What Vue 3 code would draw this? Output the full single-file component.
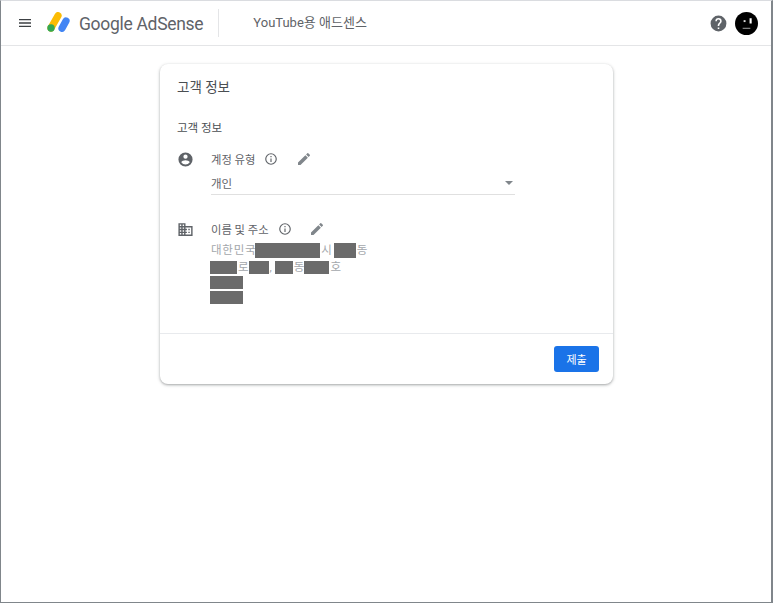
<script setup>
const pencil = 'M3 17.25V21h3.75L17.81 9.94l-3.75-3.75L3 17.25zM20.71 7.04a1 1 0 0 0 0-1.41l-2.34-2.34a1 1 0 0 0-1.41 0l-1.83 1.83 3.75 3.75 1.83-1.83z'
const info = 'M11 7h2v2h-2zm0 4h2v6h-2zm1-9a10 10 0 1 0 0 20 10 10 0 0 0 0-20zm0 18a8 8 0 1 1 0-16 8 8 0 0 1 0 16z'
</script>

<template>
  <div class="frame">
    <header class="topbar">
      <svg class="menu-icon" viewBox="0 0 24 24"><path d="M3 18h18v-2H3v2zm0-5h18v-2H3v2zm0-7v2h18V6H3z" /></svg>
      <svg class="logo" viewBox="0 0 24 22">
        <path d="M4 16 11 3.7" stroke="#fbbc04" stroke-width="7.2" stroke-linecap="round" />
        <path d="M15 16.3 19 9" stroke="#4285f4" stroke-width="7.2" stroke-linecap="round" />
        <circle cx="4" cy="16" r="3.7" fill="#34a853" />
      </svg>
      <span class="brand">Google AdSense</span>
      <span class="divider"></span>
      <span class="product">YouTube용 애드센스</span>
      <span class="spacer"></span>
      <svg class="help" viewBox="0 0 24 24"><path d="M12 2a10 10 0 1 0 0 20 10 10 0 0 0 0-20zm1 17h-2v-2h2v2zm2.07-7.75-.9.92C13.45 12.9 13 13.5 13 15h-2v-.5c0-1.1.45-2.1 1.17-2.83l1.24-1.26A2 2 0 1 0 10 9H8a4 4 0 1 1 8 0c0 .88-.36 1.68-.93 2.25z" /></svg>
      <svg class="avatar" viewBox="0 0 24 24">
        <circle cx="12" cy="12" r="12" fill="#000" />
        <rect x="15.2" y="6.5" width="2.2" height="5.5" fill="#fff" />
        <rect x="9" y="8.5" width="2" height="2" fill="#ddd" />
        <path d="M8 17h8" stroke="#aaa" stroke-width="1" />
      </svg>
    </header>

    <main class="content">
      <section class="card">
        <div class="card-body">
          <h1 class="card-title">고객 정보</h1>
          <h2 class="section-title">고객 정보</h2>

          <div class="field account">
            <svg class="field-icon" viewBox="0 0 24 24"><path d="M12 2a10 10 0 1 0 0 20 10 10 0 0 0 0-20zm0 3a3 3 0 1 1 0 6 3 3 0 0 1 0-6zm0 14.2a7.2 7.2 0 0 1-6-3.22c.03-2 4-3.08 6-3.08s5.97 1.09 6 3.08a7.2 7.2 0 0 1-6 3.22z" /></svg>
            <div class="field-main">
              <div class="field-label">
                <span>계정 유형</span>
                <svg class="info" viewBox="0 0 24 24"><path :d="info" /></svg>
                <svg class="edit" viewBox="0 0 24 24"><path :d="pencil" /></svg>
              </div>
              <div class="select">
                <span>개인</span>
                <i class="arrow"></i>
              </div>
            </div>
          </div>

          <div class="field address">
            <svg class="field-icon" viewBox="0 0 24 24"><path d="M12 7V3H2v18h20V7H12zM6 19H4v-2h2v2zm0-4H4v-2h2v2zm0-4H4V9h2v2zm0-4H4V5h2v2zm4 12H8v-2h2v2zm0-4H8v-2h2v2zm0-4H8V9h2v2zm0-4H8V5h2v2zm10 12h-8v-2h2v-2h-2v-2h2v-2h-2V9h8v10zm-2-8h-2v2h2v-2zm0 4h-2v2h2v-2z" /></svg>
            <div class="field-main">
              <div class="field-label">
                <span>이름 및 주소</span>
                <svg class="info" viewBox="0 0 24 24"><path :d="info" /></svg>
                <svg class="edit" viewBox="0 0 24 24"><path :d="pencil" /></svg>
              </div>
              <div class="addr">
                <div class="addr-line first">대한민국<b class="mask w65"></b>시<b class="mask w22"></b>동</div>
                <div class="addr-line second"><b class="mask w27"></b>로<b class="mask w20"></b>,<b class="mask w18"></b>동<b class="mask w25"></b>호</div>
                <div class="addr-line"><b class="mask w33"></b></div>
                <div class="addr-line"><b class="mask w33"></b></div>
              </div>
            </div>
          </div>
        </div>

        <footer class="card-footer">
          <button class="submit">제출</button>
        </footer>
      </section>
    </main>
  </div>
</template>

<style>
html, body {
  margin: 0;
  background: #fff;
}
</style>

<style scoped>
.frame {
  box-sizing: border-box;
  height: 603px;
  overflow: hidden;
  background: #fff;
  border: 1px solid #80868b;
  border-top-color: #dadce0;
  border-right-width: 2px;
  font-family: Roboto, "Noto Sans CJK KR", sans-serif;
}

.topbar {
  display: flex;
  align-items: center;
  box-sizing: border-box;
  height: 45px;
  border-bottom: 1px solid #e4e5e7;
  padding-left: 16px;
}

.menu-icon {
  width: 16px;
  height: 16px;
  fill: #3c4043;
}

.logo {
  width: 24px;
  height: 22px;
  margin-left: 14px;
}

.brand {
  margin-left: 8px;
  margin-top: 2px;
  font-size: 17.5px;
  letter-spacing: -.3px;
  color: #5f6368;
  white-space: nowrap;
}

.divider {
  width: 1px;
  height: 28px;
  margin-left: 15px;
  background: #e4e5e7;
}

.product {
  margin-left: 34px;
  margin-bottom: 4px;
  font-size: 13px;
  color: #5f6368;
}

.spacer {
  flex: 1;
}

.help {
  width: 19px;
  height: 19px;
  fill: #5f6368;
}

.avatar {
  width: 23px;
  height: 23px;
  margin-left: 7px;
  margin-right: 13px;
}

.content {
  display: flex;
  justify-content: center;
  padding-top: 18px;
  padding-left: 1px;
}

.card {
  width: 453px;
  height: 320px;
  display: flex;
  flex-direction: column;
  box-sizing: border-box;
  border-radius: 8px;
  background: #fff;
  box-shadow: 0 1px 2px rgba(60, 64, 67, .3), 0 1px 3px 1px rgba(60, 64, 67, .15);
}

.card-body {
  flex: 1;
  padding: 15px 17px 0;
}

.card-title {
  margin: 0;
  font-size: 13.5px;
  font-weight: 400;
  line-height: 16px;
  color: #4a4e52;
}

.section-title {
  margin: 25px 0 0;
  font-size: 11.5px;
  font-weight: 400;
  line-height: 16px;
  color: #4a4e52;
}

.field {
  display: flex;
}

.account {
  margin-top: 15px;
}

.address {
  margin-top: 26px;
}

.field-icon {
  width: 17px;
  height: 17px;
  fill: #5f6368;
}

.field-main {
  margin-left: 17px;
}

.field-label {
  display: flex;
  align-items: center;
  height: 16px;
  font-size: 11.3px;
  color: #5f6368;
}

.info {
  width: 14px;
  height: 14px;
  margin-left: 9px;
  fill: #5f6368;
}

.edit {
  width: 16px;
  height: 16px;
  margin-left: 17.5px;
  fill: #80868b;
}

.select {
  display: flex;
  align-items: center;
  justify-content: space-between;
  box-sizing: border-box;
  width: 304px;
  height: 24px;
  margin-top: 4px;
  border-bottom: 1px solid #e0e0e0;
  font-size: 11.5px;
  color: #5f6368;
}

.arrow {
  width: 0;
  height: 0;
  margin-top: 1px;
  margin-right: 2px;
  border-left: 4px solid transparent;
  border-right: 4px solid transparent;
  border-top: 4px solid #80868b;
}

.addr {
  display: flex;
  flex-direction: column;
  gap: 2px;
  margin-top: 6px;
}

.addr-line {
  display: flex;
  align-items: stretch;
  height: 13px;
  font-size: 11.5px;
  line-height: 13px;
  color: #a3a7ab;
  white-space: nowrap;
}

.addr-line.first {
  height: 15px;
  line-height: 15px;
  letter-spacing: .75px;
}

.addr-line.second {
  margin-top: 1px;
}

.mask {
  display: block;
  margin: 0 1px;
  background: #6b6b6b;
}

.addr-line .mask:first-child {
  margin-left: -1px;
}

.w18 { width: 18px; margin-left: 3px; }
.w20 { width: 20px; margin-left: 0; }
.w22 { width: 22px; }
.w25 { width: 25px; margin-left: 0; }
.w27 { width: 27px; }
.w33 { width: 33px; }
.w65 { width: 65px; }

.card-footer {
  display: flex;
  justify-content: flex-end;
  align-items: flex-start;
  box-sizing: border-box;
  height: 51px;
  padding: 12px 14px 0 0;
  border-top: 1px solid #e8eaed;
}

.submit {
  width: 45px;
  height: 26px;
  padding: 0;
  border: 0;
  border-radius: 3px;
  background: #1a73e8;
  color: #fff;
  font-family: inherit;
  font-size: 11px;
}
</style>
